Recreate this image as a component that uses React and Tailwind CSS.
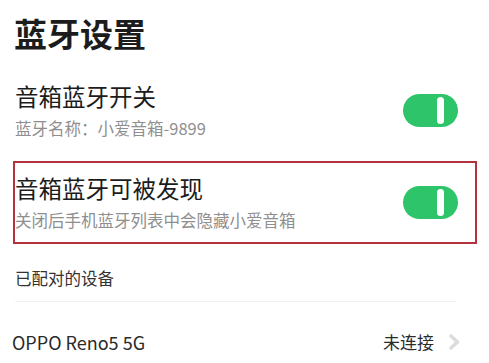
import React from 'react';

const Toggle = () => (
  <div className="flex items-center w-[55px] h-[33px] rounded-full bg-[#2dc46a] pl-[34px] shrink-0">
    <div className="w-[7px] h-[27px] rounded-full bg-white" />
  </div>
);

const App = () => {
  return (
    <div
      className="w-[489px] h-[363px] bg-white overflow-hidden"
      style={{ fontFamily: '"Noto Sans CJK SC", "Noto Sans", sans-serif' }}
    >
      <h1 className="pt-[17px] pl-[14px] text-[33px] leading-[33px] font-bold text-[#1c1c1c]">蓝牙设置</h1>

      <div className="mt-[34px] flex items-center justify-between pl-[15px] pr-[31px]">
        <div>
          <div className="text-[23.5px] leading-[24px] text-[#1c1c1c]">音箱蓝牙开关</div>
          <div className="mt-[12px] text-[16.5px] leading-[17px] text-[#8f8f8f]">蓝牙名称：小爱音箱-9899</div>
        </div>
        <Toggle />
      </div>

      <div className="mt-[24px] ml-[13px] w-[464px] border-[2.5px] border-[#b3323c] flex items-center justify-between pt-[13px] pb-[13px] pl-[0px] pr-[17px]">
        <div>
          <div className="text-[23.5px] leading-[24px] text-[#1c1c1c]">音箱蓝牙可被发现</div>
          <div className="mt-[12px] text-[16.5px] leading-[17px] text-[#8f8f8f]">关闭后手机蓝牙列表中会隐藏小爱音箱</div>
        </div>
        <Toggle />
      </div>

      <div className="mt-[25px] pl-[15px] text-[16.5px] leading-[18px] text-[#333]">已配对的设备</div>
      <div className="mt-[14px] ml-[15px] w-[442px] h-px bg-[#f1f1f1]" />

      <div className="mt-[31px] flex items-center justify-between pl-[12px] pr-[28px]">
        <span className="text-[18px] leading-[18px] text-[#2a2a2a]">OPPO Reno5 5G</span>
        <div className="flex items-center gap-[14px]">
          <span className="text-[17px] leading-[18px] text-[#2a2a2a]">未连接</span>
          <svg width="13" height="16" viewBox="0 0 13 16" fill="none">
            <polyline points="3,2 9.5,8 3,14" stroke="#dcdcdc" strokeWidth="3.5" strokeLinecap="round" strokeLinejoin="round" />
          </svg>
        </div>
      </div>
    </div>
  );
};

export default App;
